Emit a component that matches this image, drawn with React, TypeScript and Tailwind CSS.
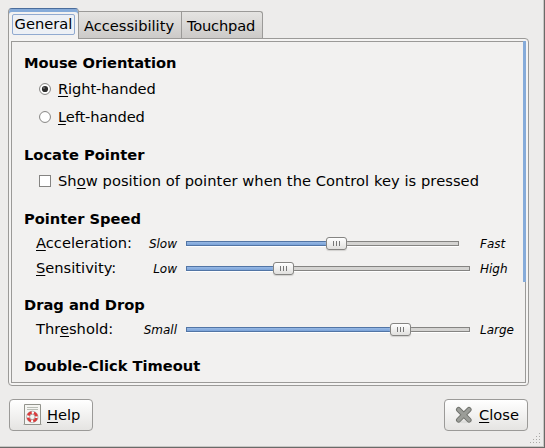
import type { ReactNode } from "react";

function Key({ children }: { children: ReactNode }) {
  return <span className="underline decoration-1 underline-offset-[2px] [text-decoration-skip-ink:none]">{children}</span>;
}

function Heading({ children, className }: { children: ReactNode; className: string }) {
  return <h2 className={`ml-3 h-[18px] font-bold leading-[18px] ${className}`}>{children}</h2>;
}

function Radio({ checked, children }: { checked?: boolean; children: ReactNode }) {
  return (
    <label className="ml-[27px] flex h-7 items-center tracking-[-0.12px]">
      <svg width="12" height="12" viewBox="0 0 12 12" className="mr-[7px] shrink-0">
        <circle cx="6" cy="6" r="5.45" fill="#fff" stroke="#858482" />
        {checked && <circle cx="6" cy="6" r="3.1" fill="#2d2d2d" />}
        {checked && <circle cx="5" cy="5" r=".9" fill="#777" />}
      </svg>
      {children}
    </label>
  );
}

type SliderProps = { label: ReactNode; low: string; high: string; track: string; fill: string; thumb: string };

function SliderRow({ label, low, high, track, fill, thumb }: SliderProps) {
  return (
    <div className="ml-6 flex h-[25px] items-center whitespace-nowrap">
      <span className="w-[100px] pb-px leading-[18px]">{label}</span>
      <span className="w-[41px] pt-px text-right text-[12px] italic leading-[18px]">{low}</span>
      <div className={`relative ml-[9px] h-[5px] ${track}`}>
        <div className="h-[5px] border border-[#858482] bg-[#d5d4d2] shadow-[0_1px_#fff]" />
        <div className={`absolute left-0 top-0 h-[5px] border border-[#5275a5] bg-gradient-to-b from-[#98b9e5] to-[#7ba3d8] ${fill}`} />
        <div className={`absolute -top-[4px] flex h-[13px] w-[21px] items-center justify-center gap-[2px] rounded-[3px] border border-[#858482] bg-gradient-to-b from-white to-[#e1e0de] shadow-[0_1px_1px_#d2d1cf] ${thumb}`}>
          <i className="h-[5px] w-px bg-[#777]" />
          <i className="h-[5px] w-px bg-[#777]" />
          <i className="h-[5px] w-px bg-[#777]" />
        </div>
      </div>
      <span className="ml-auto w-[45px] pt-px text-[12px] italic leading-[18px]">{high}</span>
    </div>
  );
}

function HelpIcon() {
  return (
    <svg width="19" height="22" viewBox="0 0 19 22" className="shrink-0">
      <path d="M0 20.5h19" stroke="#c9c9c5" />
      <path d="M1.5.5h16v20h-16z" fill="#f5f5f2" stroke="#92938c" />
      <path d="M4 3.5h11M4 5.5h11" stroke="#babdb6" />
      <circle cx="9.3" cy="12.9" r="4.3" fill="none" stroke="#fff" strokeWidth="3.4" />
      <circle cx="9.3" cy="12.9" r="5.7" fill="none" stroke="#969696" strokeWidth=".7" />
      <circle cx="9.3" cy="12.9" r="2.7" fill="#f5f5f2" stroke="#888" strokeWidth=".7" />
      <circle cx="9.3" cy="12.9" r="4.3" fill="none" stroke="#d93a3a" strokeWidth="2.6" strokeDasharray="4.5 2.254" strokeDashoffset="-1.13" />
    </svg>
  );
}

function CloseIcon() {
  return (
    <svg width="18" height="18" viewBox="0 0 18 18" className="shrink-0">
      <ellipse cx="9.5" cy="15.8" rx="8" ry="1.4" fill="#dededc" />
      <path d="M3.6 3.6L14 14M14 3.6L3.6 14" stroke="#6f716c" strokeWidth="5.2" strokeLinecap="round" />
      <path d="M3.6 3.6L14 14M14 3.6L3.6 14" stroke="#9b9d98" strokeWidth="3.4" strokeLinecap="round" />
    </svg>
  );
}

function Button({ children }: { children: ReactNode }) {
  return (
    <button className="flex h-8 w-[84px] items-center rounded-[4px] border border-[#9b9a98] bg-gradient-to-b from-white to-[#e5e4e2]">
      {children}
    </button>
  );
}

export default function App() {
  return (
    <div className="relative flex h-[448px] w-[545px] flex-col overflow-hidden border-b border-r border-[#6b6a68] bg-[#edeceb] pl-2 pt-2 font-['DejaVu_Sans',sans-serif] text-[14.667px] text-black shadow-[inset_-1px_-1px_#c8c7c5]">
      <nav className="relative z-10 flex h-[31px] items-end whitespace-nowrap">
        <div className="h-[31px] w-[71px] rounded-t-[4px] border border-b-0 border-[#9b9a98] border-t-[#4a6c9b] bg-[#f3f2f1] shadow-[inset_0_3px_#86abd9]">
          <div className="ml-[3px] mt-[5px] flex h-[21px] w-[63px] items-center justify-center rounded-[2px] border border-[#91aad0] bg-[#edf0f5] pb-[2px]">General</div>
        </div>
        <div className="mb-px flex h-[27px] w-[103px] items-center justify-center border border-b-0 border-l-0 border-[#9b9a98] bg-gradient-to-b from-[#e5e4e2] to-[#cccac8] pr-[2px] pt-px">Accessibility</div>
        <div className="mb-px flex h-[27px] w-[81px] items-center justify-center rounded-tr-[3px] border border-b-0 border-l-0 border-[#9b9a98] bg-gradient-to-b from-[#e5e4e2] to-[#cccac8] pr-[2px] pt-px tracking-[-0.2px]">Touchpad</div>
      </nav>
      <main className="-mt-px h-[348px] w-[521px] shrink-0 rounded-b-[4px] rounded-tr-[4px] border border-[#9b9a98] bg-[#f5f4f3] p-[2px]">
        <div className="relative h-[342px] w-[515px] border border-[#9b9a98] bg-[#f2f1f0]">
          <div className="absolute -right-px -top-px h-[241px] w-[3px] bg-[#86abd9]" />
          <Heading className="mt-3 tracking-[-0.06px]">Mouse Orientation</Heading>
          <div className="mt-[3px]">
            <Radio checked><span><Key>R</Key>ight-handed</span></Radio>
            <Radio><span><Key>L</Key>eft-handed</span></Radio>
          </div>
          <Heading className="mt-[15px]">Locate Pointer</Heading>
          <label className="ml-[27px] mt-2 flex h-[18px] items-center whitespace-nowrap">
            <i className="mr-[7px] h-3 w-3 border border-[#858482] bg-white" />
            <span className="tracking-[0.06px]">Sh<Key>o</Key>w position of pointer when the Control key is pressed</span>
          </label>
          <Heading className="mt-5">Pointer Speed</Heading>
          <div className="mt-[3px]">
            <SliderRow label={<><Key>A</Key>cceleration:</>} low="Slow" high="Fast" track="w-[273px]" fill="w-[141px]" thumb="left-[140px]" />
            <SliderRow label={<><Key>S</Key>ensitivity:</>} low="Low" high="High" track="w-[284px]" fill="w-[88px]" thumb="left-[87px]" />
          </div>
          <Heading className="mt-[15px]">Drag and Drop</Heading>
          <div className="mt-[3px]">
            <SliderRow label={<>Thr<Key>e</Key>shold:</>} low="Small" high="Large" track="w-[284px]" fill="w-[205px]" thumb="left-[204px]" />
          </div>
          <Heading className="mt-[15px]">Double-Click Timeout</Heading>
        </div>
      </main>
      <footer className="ml-px mt-[13px] flex w-[519px] justify-between">
        <Button><span className="ml-[13px] flex"><HelpIcon /></span><span className="ml-[5px]"><Key>H</Key>elp</span></Button>
        <Button><span className="ml-[10px] flex"><CloseIcon /></span><span className="ml-[6px]"><Key>C</Key>lose</span></Button>
      </footer>
      <svg width="12" height="12" viewBox="0 0 12 12" className="absolute bottom-[3px] right-[3px]">
        {[0, 1, 2, 3].map((r) =>
          [0, 1, 2, 3].map((c) => c >= 3 - r && <rect key={`${r}-${c}`} x={c * 3 + 1} y={r * 3 + 1} width="1" height="1" fill="#aaa9a7" />)
        )}
      </svg>
    </div>
  );
}
